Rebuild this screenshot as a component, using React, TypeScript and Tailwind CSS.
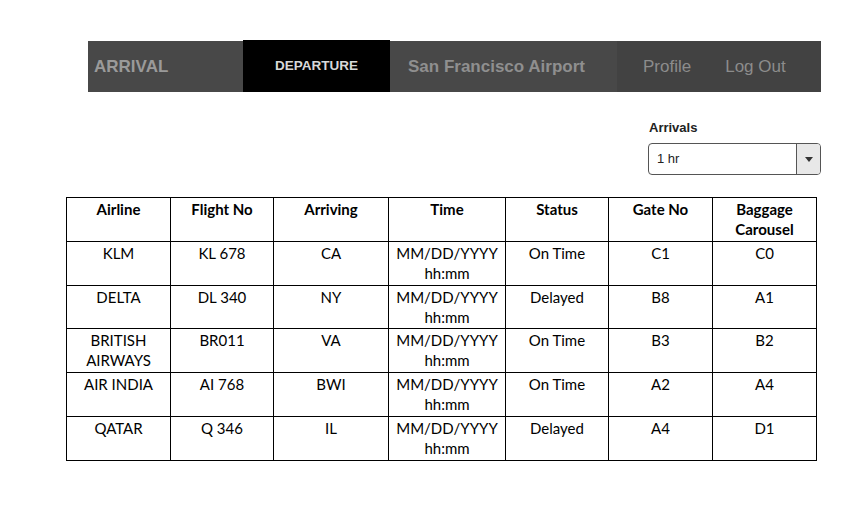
import * as React from 'react'

interface Flight {
  airline: string
  flightNo: string
  arriving: string
  status: string
  gate: string
  carousel: string
}

const flights: Flight[] = [
  { airline: 'KLM', flightNo: 'KL 678', arriving: 'CA', status: 'On Time', gate: 'C1', carousel: 'C0' },
  { airline: 'DELTA', flightNo: 'DL 340', arriving: 'NY', status: 'Delayed', gate: 'B8', carousel: 'A1' },
  { airline: 'BRITISH AIRWAYS', flightNo: 'BR011', arriving: 'VA', status: 'On Time', gate: 'B3', carousel: 'B2' },
  { airline: 'AIR INDIA', flightNo: 'AI 768', arriving: 'BWI', status: 'On Time', gate: 'A2', carousel: 'A4' },
  { airline: 'QATAR', flightNo: 'Q 346', arriving: 'IL', status: 'Delayed', gate: 'A4', carousel: 'D1' },
]

const widths = ['w-[104px]', 'w-[103px]', 'w-[115px]', 'w-[117px]', 'w-[103px]', 'w-[104px]', 'w-[104px]']

function NavBar() {
  return (
    <div className="ml-[88px] flex h-[51px] w-[733px] items-stretch bg-[#484848] font-['Liberation_Sans',Arial,sans-serif] text-[17px]">
      <div className="flex w-[155px] items-center pl-[6px] font-bold text-[#9a9a9a]">ARRIVAL</div>
      <div className="-mt-px flex w-[147px] items-center justify-center bg-black text-[13.5px] font-bold text-[#d8d8d8]">
        DEPARTURE
      </div>
      <div className="flex w-[227px] items-center pl-[18px] font-bold text-[#8f8f8f]">San Francisco Airport</div>
      <div className="flex flex-1 items-center bg-[#424242] pl-[26px] text-[#8c8c8c]">
        <span>Profile</span>
        <span className="ml-[34px]">Log Out</span>
      </div>
    </div>
  )
}

function ArrivalsSelect() {
  return (
    <div className="ml-[88px] flex w-[733px] justify-end pt-[28px] font-['Liberation_Sans',Arial,sans-serif]">
      <div className="w-[173px]">
        <div className="pl-px text-[13px] font-bold leading-[16px] text-[#222]">Arrivals</div>
        <div className="mt-[7px] flex h-[32px] overflow-hidden rounded-[4px] border border-[#555] bg-white">
          <div className="flex flex-1 items-center pl-[8px] text-[13px] text-[#222]">1 hr</div>
          <div className="flex w-[24px] items-center justify-center border-l border-[#555] bg-[#e8e8e8]">
            <svg width="8" height="5" viewBox="0 0 8 5">
              <path d="M0 0 L8 0 L4 5 Z" fill="#333" />
            </svg>
          </div>
        </div>
      </div>
    </div>
  )
}

function Cell({ children, bold, i }: { children: React.ReactNode; bold?: boolean; i: number }) {
  return (
    <td
      className={`${widths[i]} h-[43.8px] border border-black px-1 pt-[1px] text-center align-top leading-[20px] ${
        bold ? 'font-bold' : ''
      }`}
    >
      {children}
    </td>
  )
}

export default function App() {
  return (
    <div className="h-[517px] w-[862px] bg-white pt-[41px] text-black">
      <NavBar />
      <ArrivalsSelect />
      <table className="ml-[66px] mt-[22px] w-[750px] table-fixed border-collapse font-['Lato',Carlito,sans-serif] text-[15px]">
        <thead>
          <tr>
            {['Airline', 'Flight No', 'Arriving', 'Time', 'Status', 'Gate No', 'Baggage Carousel'].map((h, i) => (
              <Cell key={h} i={i} bold>
                {h === 'Baggage Carousel' ? (
                  <>
                    Baggage
                    <br />
                    Carousel
                  </>
                ) : (
                  h
                )}
              </Cell>
            ))}
          </tr>
        </thead>
        <tbody>
          {flights.map((f) => (
            <tr key={f.flightNo}>
              <Cell i={0}>{f.airline}</Cell>
              <Cell i={1}>{f.flightNo}</Cell>
              <Cell i={2}>{f.arriving}</Cell>
              <Cell i={3}>
                MM/DD/YYYY
                <br />
                hh:mm
              </Cell>
              <Cell i={4}>{f.status}</Cell>
              <Cell i={5}>{f.gate}</Cell>
              <Cell i={6}>{f.carousel}</Cell>
            </tr>
          ))}
        </tbody>
      </table>
    </div>
  )
}
